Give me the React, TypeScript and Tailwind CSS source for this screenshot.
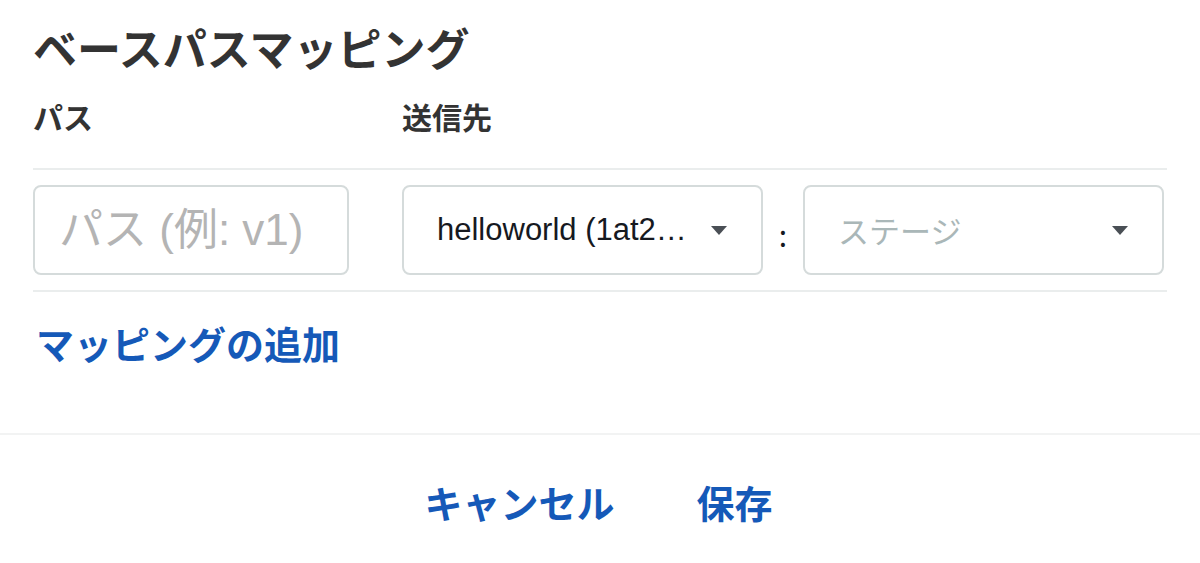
const JP = "font-['Noto_Sans_CJK_JP','Noto_Sans',sans-serif]";

function Caret() {
  return (
    <svg width="16" height="9" viewBox="0 0 16 9" className="shrink-0">
      <path d="M0 0 L16 0 L8 9 Z" fill="#4a4f55" />
    </svg>
  );
}

export default function App() {
  return (
    <div className={`w-[1200px] h-[563px] bg-white text-[#333333] ${JP} overflow-hidden`}>
      <div className="px-[33px]">
        {/* Title */}
        <h1 className="h-[96px] pt-[18px] text-[44px] font-bold leading-[58px]">
          ベースパスマッピング
        </h1>

        {/* Column labels */}
        <div className="flex h-[72px] text-[30px] font-bold leading-[40px]">
          <div className="w-[369px]">パス</div>
          <div>送信先</div>
        </div>

        <div className="h-[2px] bg-[#eaeded]" />

        {/* Mapping row */}
        <div className="flex items-center h-[120px]">
          <input
            className="w-[316px] h-[90px] rounded-[8px] border-2 border-[#d5dbdb] px-[24px] text-[44px] font-['Liberation_Sans','Noto_Sans_CJK_JP',sans-serif] placeholder:text-[#b4b4b4] outline-none"
            placeholder="パス (例: v1)"
          />
          <div className="w-[53px]" />
          <div className="w-[361px] h-[90px] rounded-[8px] border-2 border-[#d5dbdb] flex items-center pl-[33px] pr-[34px]">
            <span className="flex-1 text-[31px] text-[#16191f] font-['Liberation_Sans',sans-serif] whitespace-nowrap">
              helloworld (1at2…
            </span>
            <Caret />
          </div>
          <div className="w-[40px] text-center text-[30px] leading-none text-[#16191f] pt-[8px]">:</div>
          <div className="w-[361px] h-[90px] rounded-[8px] border-2 border-[#d5dbdb] flex items-center pl-[33px] pr-[34px]">
            <span className="flex-1 text-[31px] text-[#aab7b8]">ステージ</span>
            <Caret />
          </div>
        </div>

        <div className="h-[2px] bg-[#eaeded]" />

        {/* Add mapping link */}
        <div className="h-[141px] pt-[24px]">
          <a className="text-[38px] font-bold text-[#1559b8] leading-[54px] pl-[3px]">マッピングの追加</a>
        </div>
      </div>

      <div className="h-[2px] bg-[#f2f3f3]" />

      {/* Footer buttons */}
      <div className="flex justify-center gap-[82px] pt-[40px] pr-[3px]">
        <button className="text-[38px] font-bold text-[#1559b8] leading-[54px]">キャンセル</button>
        <button className="text-[38px] font-bold text-[#1559b8] leading-[54px]">保存</button>
      </div>
    </div>
  );
}
